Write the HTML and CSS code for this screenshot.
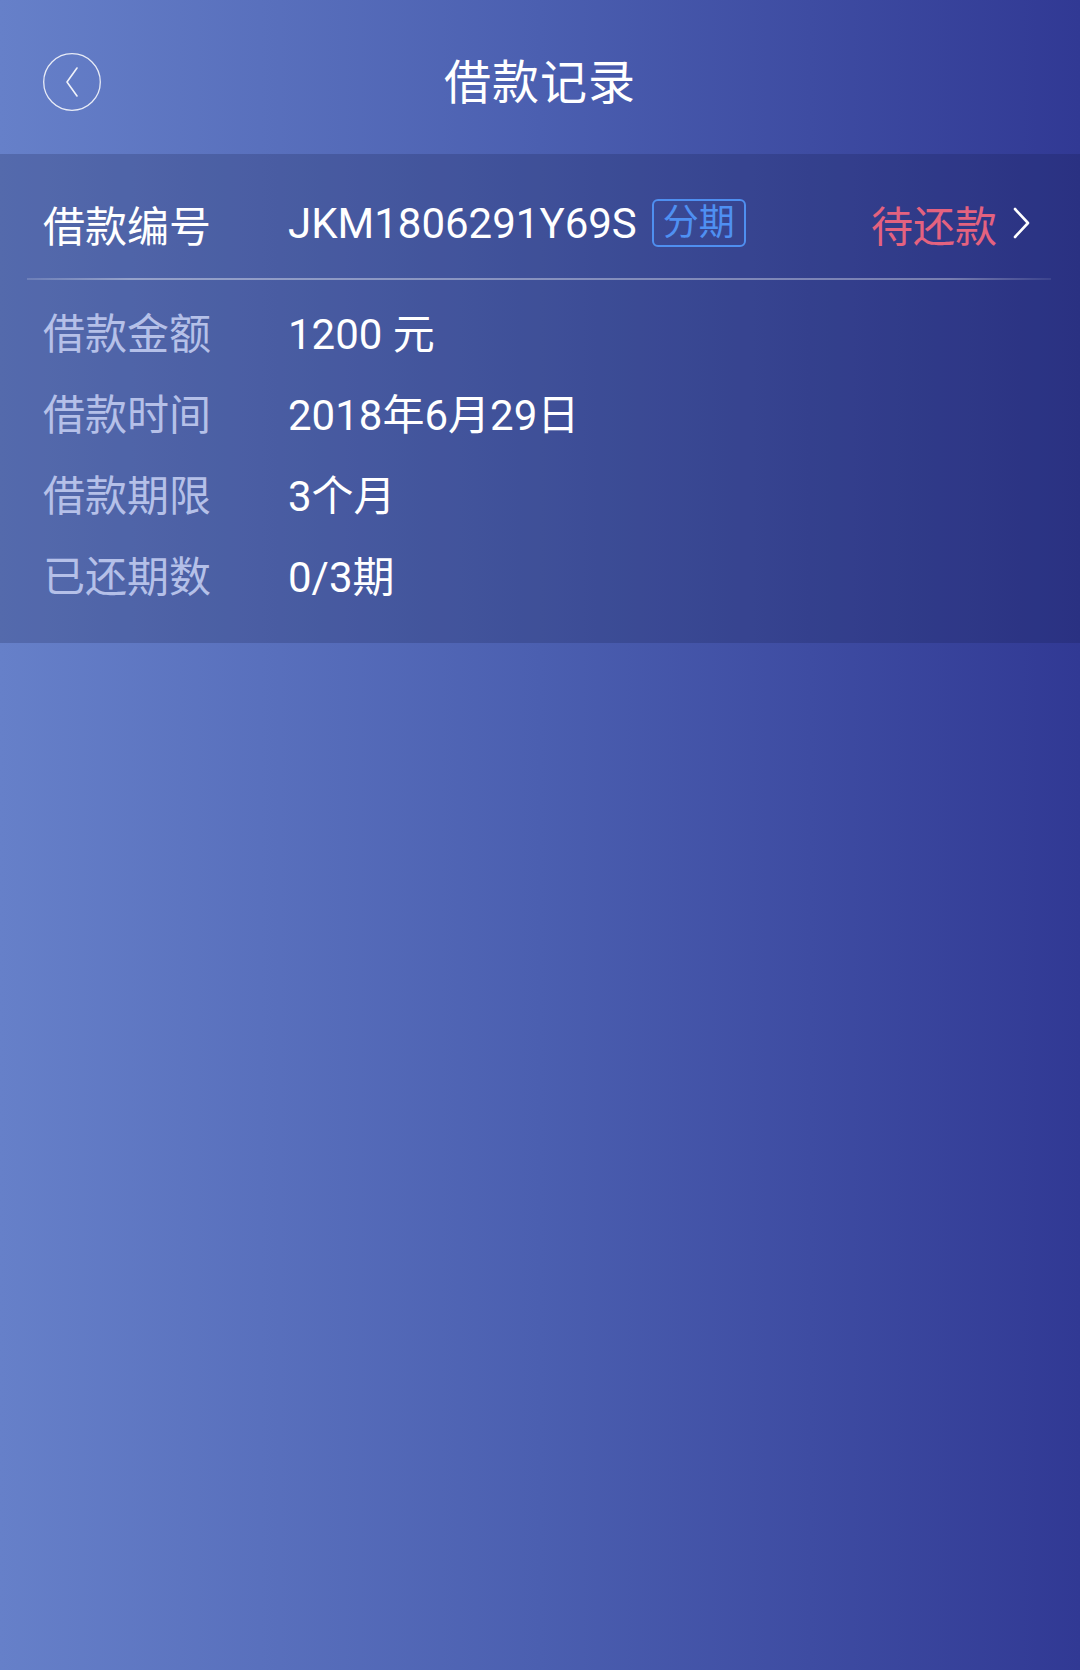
FILE: index.html
```html
<!DOCTYPE html>
<html lang="zh-CN">
<head>
<meta charset="utf-8">
<title>借款记录</title>
<link rel="stylesheet" href="styles.css">
</head>
<body>
<div class="page">
  <header class="header">
    <div class="back">
      <svg width="58" height="58" viewBox="0 0 58 58">
        <circle cx="29" cy="29" r="28.3" fill="none" stroke="rgba(255,255,255,0.85)" stroke-width="1.3"/>
        <path d="M34 15 L24 29 L34 43" fill="none" stroke="rgba(255,255,255,0.9)" stroke-width="1.6" stroke-linecap="round" stroke-linejoin="round"/>
      </svg>
    </div>
    <h1 class="title">借款记录</h1>
    <div class="spacer"></div>
  </header>
  <section class="card">
    <div class="row-head">
      <span class="label-main">借款编号</span>
      <span class="value">JKM1806291Y69S</span>
      <span class="tag">分期</span>
      <span class="status">待还款</span>
      <svg class="arrow" width="18" height="32" viewBox="0 0 18 32">
        <path d="M2 2 L15 16 L2 30" fill="none" stroke="#ffffff" stroke-width="2.6" stroke-linecap="round" stroke-linejoin="round"/>
      </svg>
    </div>
    <div class="divider"></div>
    <div class="rows">
      <div class="row"><span class="label">借款金额</span><span class="value">1200 元</span></div>
      <div class="row"><span class="label">借款时间</span><span class="value">2018年6月29日</span></div>
      <div class="row"><span class="label">借款期限</span><span class="value">3个月</span></div>
      <div class="row"><span class="label">已还期数</span><span class="value">0/3期</span></div>
    </div>
  </section>
</div>
</body>
</html>
```

FILE: styles.css
```css
html, body {
  margin: 0;
  padding: 0;
}
body {
  width: 1080px;
  height: 1670px;
  overflow: hidden;
  font-family: Roboto, "Noto Sans CJK SC", sans-serif;
  background: linear-gradient(to right, #6680c9 0%, #4b5fb0 50%, #313994 100%);
  color: #ffffff;
}
.page {
  width: 1080px;
  height: 1670px;
}
.header {
  height: 154px;
  display: grid;
  grid-template-columns: 1fr auto 1fr;
  align-items: center;
  padding: 0 43px;
  box-sizing: border-box;
}
.back {
  width: 58px;
  height: 58px;
  margin-top: 10px;
}
.back svg {
  display: block;
}
.title {
  margin: 0;
  font-size: 47px;
  font-weight: 400;
  letter-spacing: 1px;
  line-height: 1;
  margin-top: 10px;
}
.card {
  background: rgba(15, 20, 60, 0.2);
  padding: 40px 49px 29px 43px;
}
.row-head {
  display: flex;
  align-items: center;
  height: 58px;
  margin-bottom: 26px;
}
.label-main {
  width: 245px;
  font-size: 42px;
  color: #ffffff;
  flex: none;
}
.value {
  font-size: 42px;
  color: #ffffff;
}
.tag {
  margin-left: 15px;
  border: 2px solid #4f8ff0;
  border-radius: 6px;
  color: #4f90f2;
  font-size: 36px;
  height: 44px;
  line-height: 44px;
  padding: 0 9px;
}
.status {
  margin-left: auto;
  font-size: 42px;
  color: #e4627f;
}
.arrow {
  margin-left: 16px;
  flex: none;
}
.divider {
  height: 2px;
  margin: 0 -20px 0 -16px;
  background: linear-gradient(to right, rgba(255,255,255,0.15), rgba(255,255,255,0.4) 10%, rgba(255,255,255,0.35) 90%, rgba(255,255,255,0.08));
}
.rows {
  padding-top: 10px;
}
.row {
  display: flex;
  align-items: center;
  height: 81px;
}
.label {
  width: 245px;
  font-size: 42px;
  color: #b5c0e8;
  flex: none;
}
```
